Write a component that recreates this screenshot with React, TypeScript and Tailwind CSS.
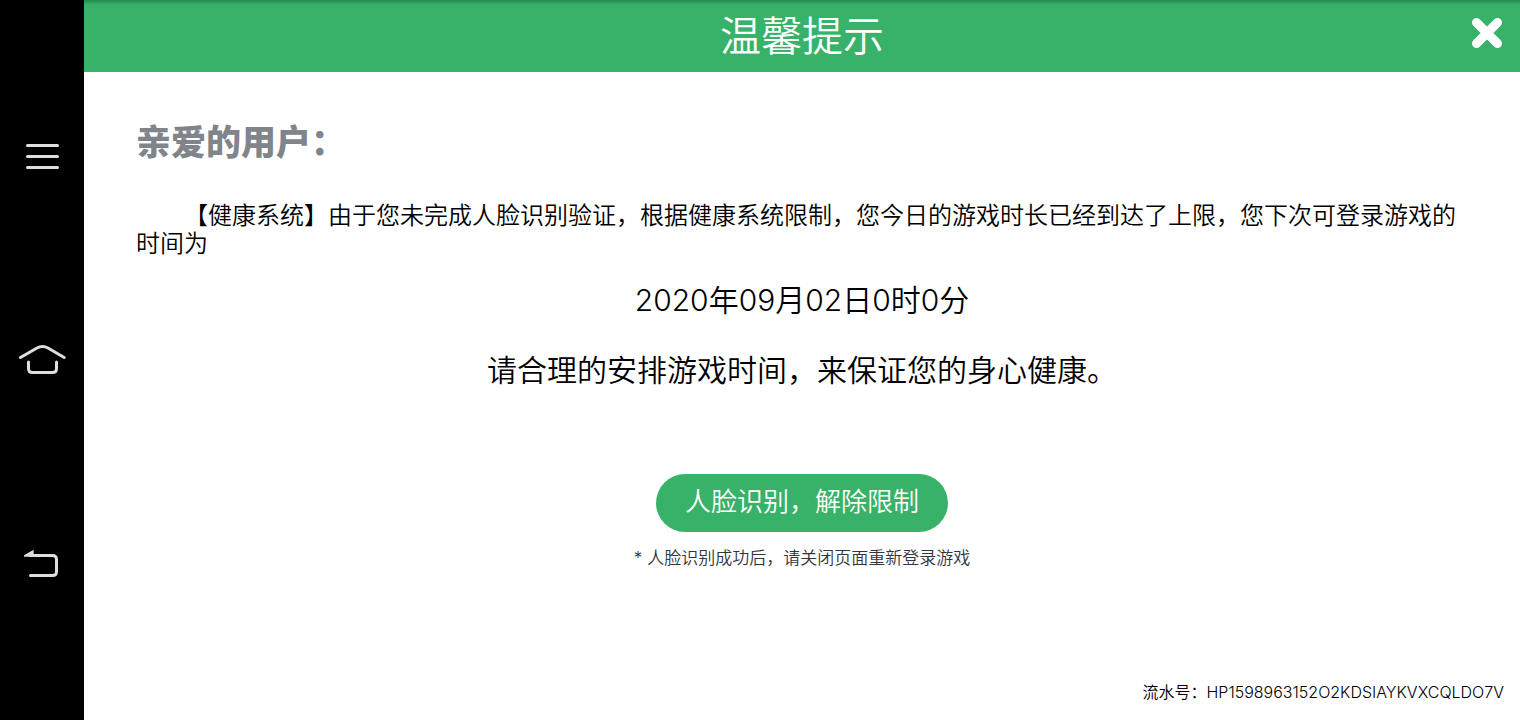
import type { ReactNode } from "react";

function NavButton({ label, children }: { label: string; children: ReactNode }) {
  return (
    <button type="button" aria-label={label} className="flex h-12 w-full items-center justify-center text-[#dedede]">
      {children}
    </button>
  );
}

function SystemNav() {
  return (
    <nav className="flex w-[84px] shrink-0 flex-col items-center justify-center gap-[156px] bg-black">
      <NavButton label="菜单">
        <svg width="48" height="32" viewBox="0 0 48 32" fill="none" stroke="currentColor" strokeWidth="3" strokeLinecap="round">
          <path d="M9.5 5.5H39.5M9.5 16.5H39.5M9.5 27.5H39.5" />
        </svg>
      </NavButton>
      <NavButton label="主页">
        <svg width="48" height="32" viewBox="0 0 48 32" fill="none" stroke="currentColor" strokeWidth="3" strokeLinecap="round" strokeLinejoin="round">
          <path d="M2.5 13.5L19 4Q24.500 1 30 4L46.200 13.5" />
          <path d="M10.500 18V24.500Q10.500 28.500 14.500 28.500H34.500Q38.500 28.500 38.500 24.500V18" />
        </svg>
      </NavButton>
      <NavButton label="返回">
        <svg width="48" height="32" viewBox="0 0 48 32" fill="none" stroke="currentColor" strokeWidth="3" strokeLinecap="round">
          <path d="M12 7.500H34.500Q38.500 7.500 38.500 11.500V23.500Q38.500 27.500 34.500 27.500H12.500" />
          <path d="M6 8.800V7.300L15.600 1.800V8.800Z" fill="currentColor" stroke="none" />
        </svg>
      </NavButton>
    </nav>
  );
}

function Header() {
  return (
    <header className="relative flex h-[72px] items-center justify-center bg-[#38b269] bg-linear-to-b from-[#238a4d] to-[#38b269] to-[5px]">
      <h1 className="text-[41px] leading-[72px] text-white">温馨提示</h1>
      <button type="button" aria-label="关闭" className="absolute top-4 right-4 text-white">
        <svg className="block" width="34" height="34" viewBox="0 0 34 34" fill="none" stroke="currentColor" strokeWidth="9" strokeLinecap="round">
          <path d="M6.500 6.500L27.500 27.500M27.500 6.500L6.500 27.500" />
        </svg>
      </button>
    </header>
  );
}

export default function App() {
  return (
    <div lang="zh-CN" className="flex min-h-screen bg-white font-['Inter','Noto_Sans_CJK_SC',sans-serif] font-[350] text-black">
      <SystemNav />
      <div className="flex min-w-0 flex-1 flex-col">
        <Header />
        <main className="flex flex-1 flex-col px-[52px] pt-12">
          <h2 className="text-[35px] leading-[44px] font-black text-[#80858b]">亲爱的用户：</h2>
          <p className="mt-[38px] indent-[48px] text-[24px] leading-[28px]">
            【健康系统】由于您未完成人脸识别验证，根据健康系统限制，您今日的游戏时长已经到达了上限，您下次可登录游戏的时间为
          </p>
          <p className="mt-6 text-center text-[30px] leading-[36px]">2020年09月02日0时0分</p>
          <p className="mt-[34px] text-center text-[30px] leading-[36px]">请合理的安排游戏时间，来保证您的身心健康。</p>
          <div className="mt-[86px] flex flex-col items-center">
            <button type="button" className="h-[58px] rounded-full bg-[#38b269] px-[29px] pb-1 text-[26px] text-white">
              人脸识别，解除限制
            </button>
            <p className="mt-3 text-[17px] leading-[28px] text-[#32363c]">* 人脸识别成功后，请关闭页面重新登录游戏</p>
          </div>
        </main>
        <footer className="px-4 pb-4 text-right text-[16px] leading-[24px]">流水号：HP1598963152O2KDSIAYKVXCQLDO7V</footer>
      </div>
    </div>
  );
}
